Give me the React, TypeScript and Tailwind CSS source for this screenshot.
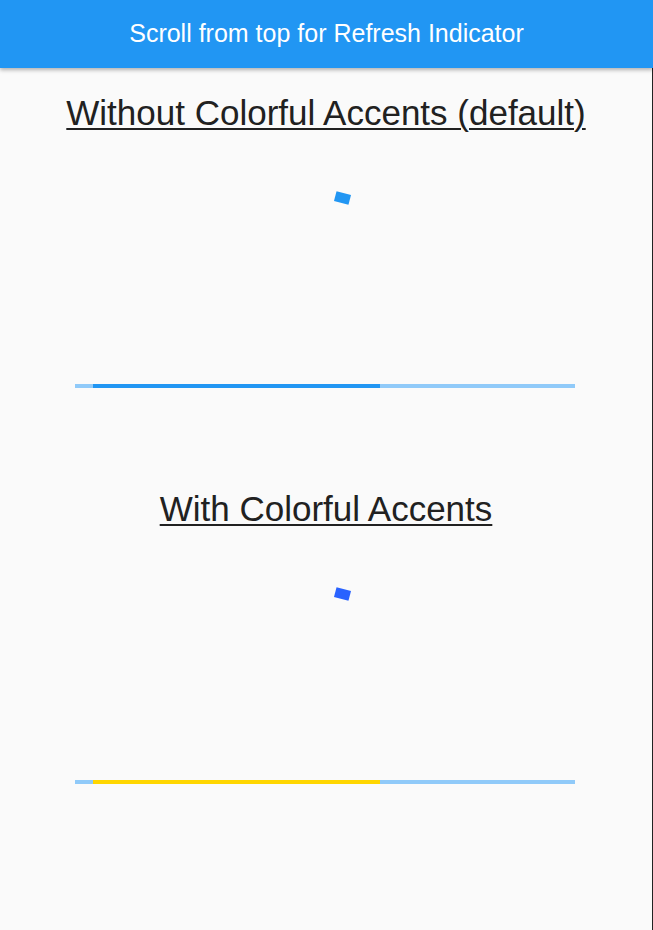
function Indicator({ accent, bar }: { accent: string; bar: string }) {
  return (
    <div className="flex flex-col items-center">
      <div className={`mt-[60px] h-[10px] w-[15px] translate-x-[16px] rotate-[15deg] ${accent}`} />
      <div className="mt-[181px] flex h-[4px] w-[500px] -translate-x-px bg-[#90CAF9]">
        <div className="w-[18px]" />
        <div className={`w-[287px] ${bar}`} />
      </div>
    </div>
  );
}

export default function App() {
  return (
    <div className="flex min-h-[930px] flex-col bg-[#FAFAFA] font-['Liberation_Sans',Arial,sans-serif]">
      <header className="relative z-10 flex h-[68px] items-center justify-center bg-[#2196F3] shadow-[0_2px_4px_rgba(0,0,0,0.3)]">
        <h2 className="text-[25px] text-white">Scroll from top for Refresh Indicator</h2>
      </header>
      <main className="flex-1 border-r border-[#222] pt-[25px]">
        <section className="flex flex-col items-center">
          <h1 className="text-[35px] leading-[40px] text-[#212121] underline decoration-2 underline-offset-[3px]">
            Without Colorful Accents (default)
          </h1>
          <Indicator accent="bg-[#2196F3]" bar="bg-[#2196F3]" />
        </section>
        <section className="mt-[101px] flex flex-col items-center">
          <h1 className="text-[35px] leading-[40px] text-[#212121] underline decoration-2 underline-offset-[3px]">
            With Colorful Accents
          </h1>
          <Indicator accent="bg-[#2962FF]" bar="bg-[#FFD600]" />
        </section>
      </main>
    </div>
  );
}
